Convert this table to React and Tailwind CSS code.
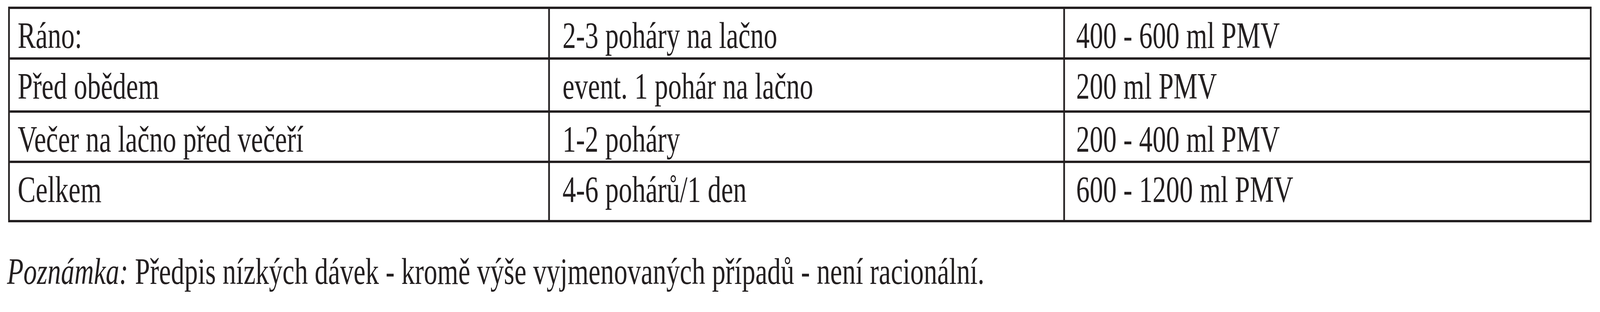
const rows = [
  ["Ráno:", "2-3 poháry na lačno", "400 - 600 ml PMV"],
  ["Před obědem", "event. 1 pohár na lačno", "200 ml PMV"],
  ["Večer na lačno před večeří", "1-2 poháry", "200 - 400 ml PMV"],
  ["Celkem", "4-6 pohárů/1 den", "600 - 1200 ml PMV"],
];

// výšky řádků včetně horní čáry
const heights = ["h-[124px]", "h-[136px] border-t-[6px]", "h-[129px] border-t-[6px]", "h-[152px] border-t-[6px]"];

export default function App() {
  return (
    <div className="w-full h-[800px] overflow-hidden bg-white">
      <div className="w-[5700px] h-[800px] origin-top-left scale-x-[0.718596] text-[#231f20] font-['Liberation_Serif',serif] text-[96px] leading-[96px]">
        <div className="pt-[17px] pl-[29px]">
          <div className="w-[5641px] border-[6px] border-[#231f20]">
            {rows.map((r, i) => (
              <div
                key={i}
                className={`grid grid-cols-[1918px_1835px_1876px] border-[#231f20] ${heights[i]}`}
              >
                <div className="pl-[28px] pt-[20px] whitespace-nowrap">{r[0]}</div>
                <div className="pl-[45px] pt-[20px] border-l-[6px] border-[#231f20] whitespace-nowrap">
                  {r[1]}
                </div>
                <div className="pl-[40px] pt-[20px] border-l-[6px] border-[#231f20] whitespace-nowrap">
                  {r[2]}
                </div>
              </div>
            ))}
          </div>
        </div>

        {/* Poznámka pod tabulkou */}
        <p className="mt-[78px] pl-[25px] whitespace-nowrap">
          <em>Poznámka:</em> Předpis nízkých dávek - kromě výše vyjmenovaných případů - není racionální.
        </p>
      </div>
    </div>
  );
}
